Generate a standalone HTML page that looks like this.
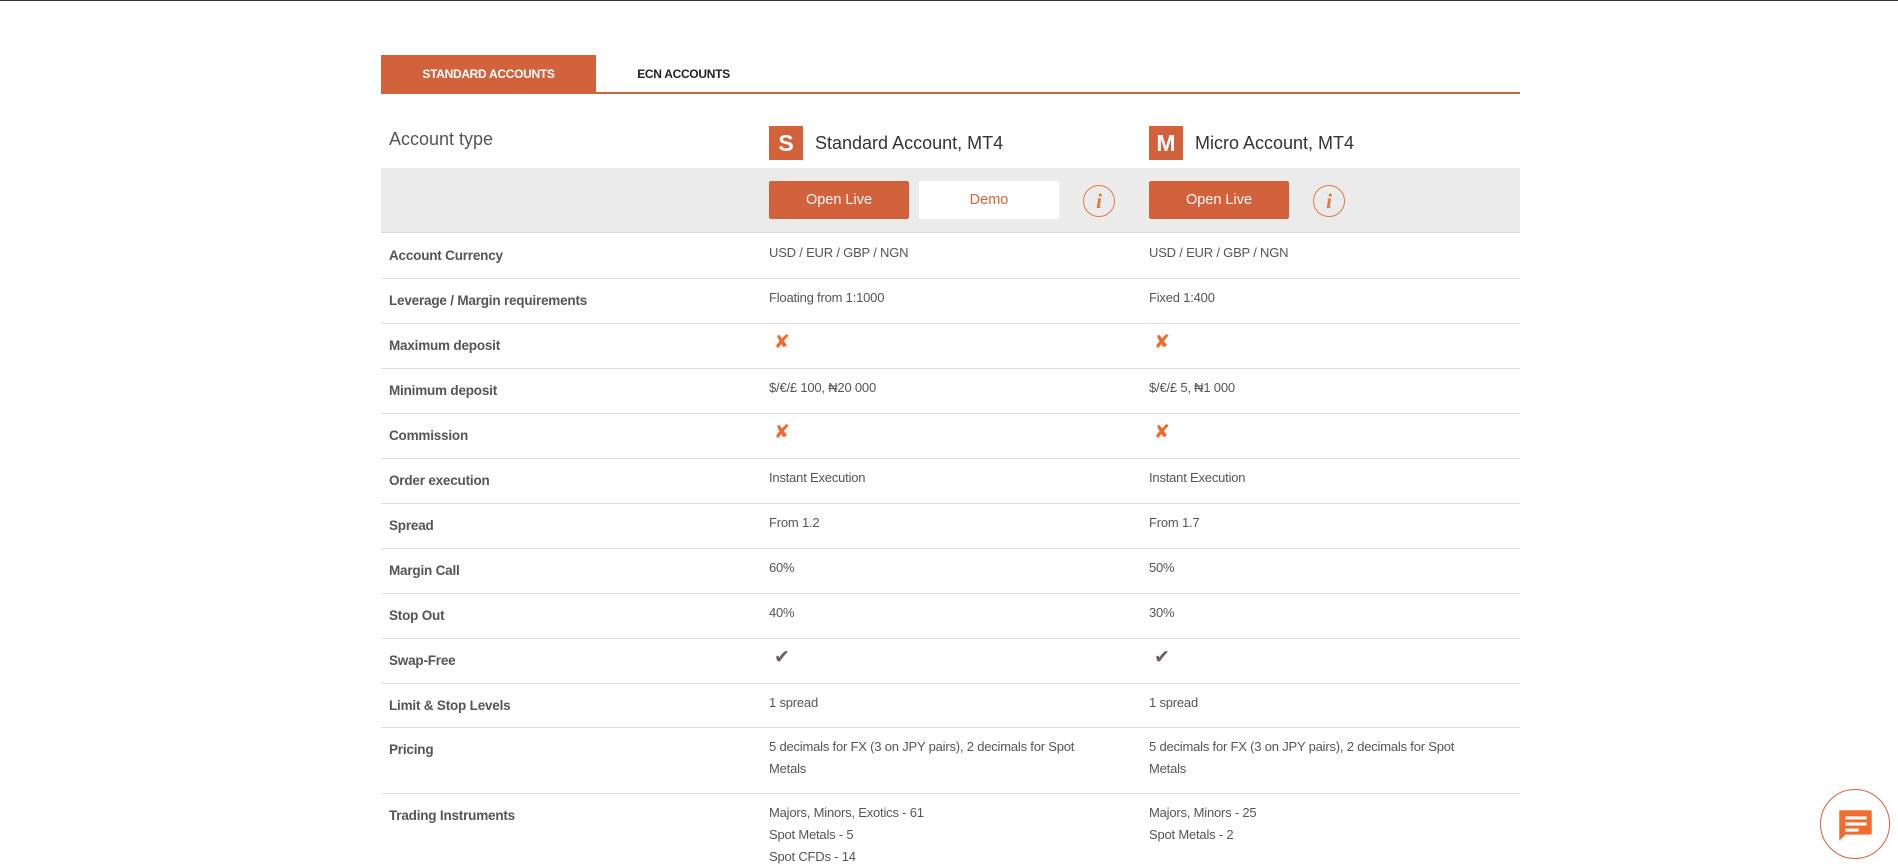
<!DOCTYPE html>
<html><head><meta charset="utf-8">
<style>
*{margin:0;padding:0;box-sizing:border-box}
html,body{width:1898px;height:868px;overflow:hidden;background:#fff;font-family:"Liberation Sans",sans-serif}
body{border-top:1px solid #333;position:relative}
.abs{position:absolute}
.tab1{left:381px;top:54px;width:215px;height:38px;background:#d2623b;color:#fff;font-weight:bold;font-size:12px;text-align:center;line-height:38px;letter-spacing:-0.3px}
.tab2{left:596px;top:54px;width:175px;height:38px;color:#222;font-weight:bold;font-size:12px;text-align:center;line-height:38px;letter-spacing:-0.3px}
.uline{left:381px;top:91px;width:1139px;height:2px;background:#d2623b}
.acct{left:389px;top:128px;font-size:18px;color:#555}
.logo{width:34px;height:34px;background:#d2623b;color:#fff;font-weight:bold;font-size:23px;text-align:center;line-height:35px;top:125px}
.hname{top:132px;font-size:18px;color:#333}
.band{left:381px;top:167px;width:1139px;height:65px;background:#ebebeb;border-bottom:1px solid #dcdcdc}
.btn{top:180px;width:140px;height:38px;background:#d2623b;color:#fff;font-size:14.5px;text-align:center;line-height:38px;border-radius:2px}
.demo{background:#fff;color:#d2623b}
.info{top:184px;width:32px;height:32px;border:1.5px solid #e07a3f;border-radius:50%;color:#e07a3f;font-family:"Liberation Serif",serif;font-style:italic;font-weight:bold;font-size:21px;text-align:center;line-height:30px}
.row{position:absolute;left:381px;width:1139px;border-bottom:1px solid #dedede}
.lbl{position:absolute;left:8px;font-size:13.5px;font-weight:bold;color:#555;letter-spacing:-0.2px}
.v1,.v2{position:absolute;font-size:13px;color:#555;line-height:22px;letter-spacing:-0.2px}
.v1{left:388px}.v2{left:768px}
.x{color:#ef6a2a;font-weight:bold;font-size:19px;font-family:"DejaVu Sans",sans-serif}
.ck{color:#6e5e5e;font-size:19px;font-family:"DejaVu Sans",sans-serif}
.chat{left:1820px;top:788px;width:70px;height:70px;border:1.5px solid #d2623b;border-radius:50%}
</style></head><body>
<div class="abs tab1">STANDARD ACCOUNTS</div>
<div class="abs tab2">ECN ACCOUNTS</div>
<div class="abs uline"></div>
<div class="abs acct">Account type</div>
<div class="abs logo" style="left:769px">S</div>
<div class="abs hname" style="left:815px">Standard Account, MT4</div>
<div class="abs logo" style="left:1149px">M</div>
<div class="abs hname" style="left:1195px">Micro Account, MT4</div>
<div class="abs band"></div>
<div class="abs btn" style="left:769px">Open Live</div>
<div class="abs btn demo" style="left:919px">Demo</div>
<div class="abs info" style="left:1083px">i</div>
<div class="abs btn" style="left:1149px">Open Live</div>
<div class="abs info" style="left:1313px">i</div>

<div class="row" style="top:233px;height:45px"><div class="lbl" style="top:14px">Account Currency</div><div class="v1" style="top:8px">USD / EUR / GBP / NGN</div><div class="v2" style="top:8px">USD / EUR / GBP / NGN</div></div>
<div class="row" style="top:278px;height:45px"><div class="lbl" style="top:14px">Leverage / Margin requirements</div><div class="v1" style="top:8px">Floating from 1:1000</div><div class="v2" style="top:8px">Fixed 1:400</div></div>
<div class="row" style="top:323px;height:45px"><div class="lbl" style="top:14px">Maximum deposit</div><div class="v1 x" style="left:393px;top:7px">✘</div><div class="v2 x" style="left:773px;top:7px">✘</div></div>
<div class="row" style="top:368px;height:45px"><div class="lbl" style="top:14px">Minimum deposit</div><div class="v1" style="top:8px">$/€/£ 100, ₦20 000</div><div class="v2" style="top:8px">$/€/£ 5, ₦1 000</div></div>
<div class="row" style="top:413px;height:45px"><div class="lbl" style="top:14px">Commission</div><div class="v1 x" style="left:393px;top:7px">✘</div><div class="v2 x" style="left:773px;top:7px">✘</div></div>
<div class="row" style="top:458px;height:45px"><div class="lbl" style="top:14px">Order execution</div><div class="v1" style="top:8px">Instant Execution</div><div class="v2" style="top:8px">Instant Execution</div></div>
<div class="row" style="top:503px;height:45px"><div class="lbl" style="top:14px">Spread</div><div class="v1" style="top:8px">From 1.2</div><div class="v2" style="top:8px">From 1.7</div></div>
<div class="row" style="top:548px;height:45px"><div class="lbl" style="top:14px">Margin Call</div><div class="v1" style="top:8px">60%</div><div class="v2" style="top:8px">50%</div></div>
<div class="row" style="top:593px;height:45px"><div class="lbl" style="top:14px">Stop Out</div><div class="v1" style="top:8px">40%</div><div class="v2" style="top:8px">30%</div></div>
<div class="row" style="top:638px;height:45px"><div class="lbl" style="top:14px">Swap-Free</div><div class="v1 ck" style="left:393px;top:7px">✔</div><div class="v2 ck" style="left:773px;top:7px">✔</div></div>
<div class="row" style="top:683px;height:44px"><div class="lbl" style="top:14px">Limit &amp; Stop Levels</div><div class="v1" style="top:8px">1 spread</div><div class="v2" style="top:8px">1 spread</div></div>
<div class="row" style="top:727px;height:66px"><div class="lbl" style="top:14px">Pricing</div><div class="v1" style="top:8px">5 decimals for FX (3 on JPY pairs), 2 decimals for Spot<br>Metals</div><div class="v2" style="top:8px">5 decimals for FX (3 on JPY pairs), 2 decimals for Spot<br>Metals</div></div>
<div class="row" style="top:793px;height:100px;border:none"><div class="lbl" style="top:14px">Trading Instruments</div><div class="v1" style="top:8px">Majors, Minors, Exotics - 61<br>Spot Metals - 5<br>Spot CFDs - 14</div><div class="v2" style="top:8px">Majors, Minors - 25<br>Spot Metals - 2</div></div>

<div class="abs chat">
<svg width="67" height="67" viewBox="0 0 66 66" style="position:absolute;left:0;top:0">
<path d="M18 20h30a2 2 0 0 1 2 2v20a2 2 0 0 1-2 2H24l-6 6z" fill="#f26c2f"/>
<rect x="24" y="26" width="21" height="3" fill="#fff"/><rect x="24" y="32" width="21" height="3" fill="#fff"/><rect x="24" y="38" width="13" height="3" fill="#fff"/>
</svg></div>
</body></html>
